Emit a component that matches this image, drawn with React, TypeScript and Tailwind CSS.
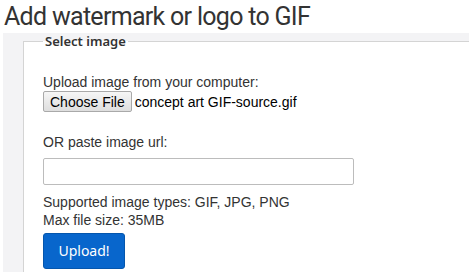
import React from 'react'

const App: React.FC = () => {
  return (
    <div className="w-[469px] h-[272px] overflow-hidden bg-white text-[#333] font-['Liberation_Sans',Arial,sans-serif]">
      <h1 className="pl-[4px] pt-[1px] h-[33px] text-[25px] leading-[32px] tracking-[-0.7px] font-['Roboto',sans-serif] text-[#333]">
        Add watermark or logo to GIF
      </h1>
      <div className="ml-[3px] pl-[20px] pt-[1px] bg-[#f3f3f5] h-[239px]">
        <fieldset className="h-full border-t border-l border-[#d4d4d4] bg-white pl-[19px] pt-0">
          <legend className="px-[2px] text-[13px] font-semibold font-['Noto_Sans',sans-serif] leading-[14px]">
            Select image
          </legend>
          <div className="pt-[25px] text-[14px] leading-[18px]">
            <p>Upload image from your computer:</p>
            <div className="flex items-center gap-[3px]">
              <button className="h-[21px] px-[6px] border border-[#a9a9a9] rounded-[2px] bg-gradient-to-b from-[#f6f6f6] to-[#dedede] text-[14px] leading-[18px] text-black">
                Choose File
              </button>
              <span className="text-black">concept art GIF-source.gif</span>
            </div>
            <p className="mt-[21px]">OR paste image url:</p>
            <input
              type="text"
              className="block mt-[7px] w-[311px] h-[27px] border border-[#bcbcbc] rounded-[2px] bg-white outline-none"
            />
            <p className="mt-[8px]">Supported image types: GIF, JPG, PNG</p>
            <p>Max file size: 35MB</p>
            <button className="mt-[4px] w-[82px] h-[36px] bg-[#0866cc] rounded-[3px] border border-[#0556ad] text-white text-[14px] font-['Noto_Sans',sans-serif]">
              Upload!
            </button>
          </div>
        </fieldset>
      </div>
    </div>
  )
}

export default App
